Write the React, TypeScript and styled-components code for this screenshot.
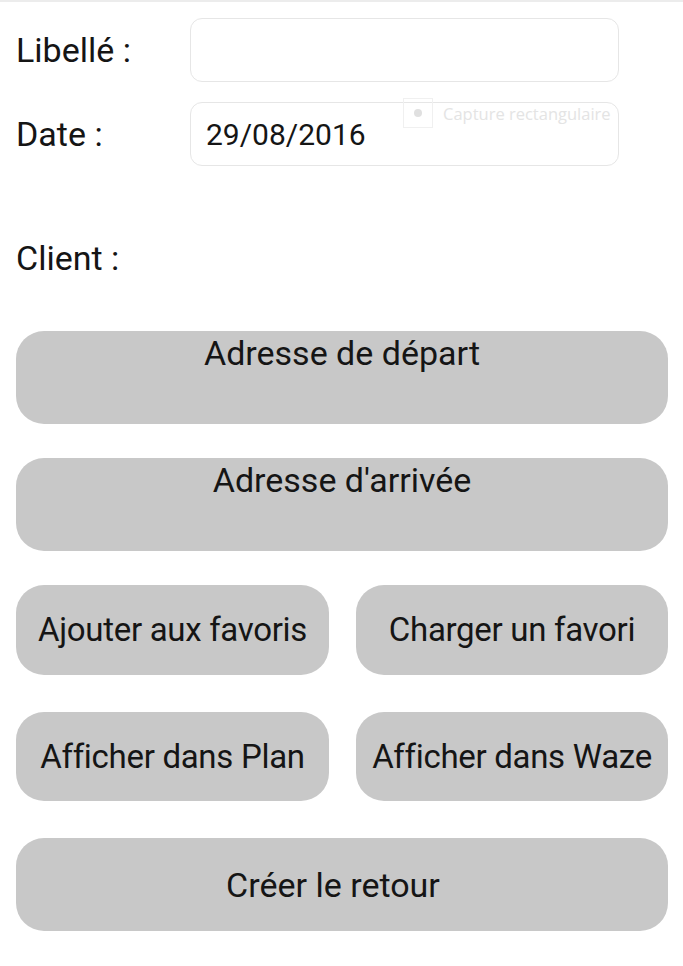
import React from "react";
import styled, { createGlobalStyle } from "styled-components";

const Global = createGlobalStyle`
  html, body { margin: 0; padding: 0; background: #ffffff; }
  body { font-family: Roboto, "Liberation Sans", Arial, sans-serif; color: #111; }
`;

const Page = styled.div`
  position: relative;
  width: 683px;
  min-height: 966px;
  box-sizing: border-box;
  padding: 0 15px 0 16px;
  border-top: 2px solid #ececec;
  display: flex;
  flex-direction: column;
`;

const FieldRow = styled.div<{ $top: number }>`
  display: flex;
  align-items: center;
  height: 64px;
  margin-top: ${(p) => p.$top}px;
`;

const Label = styled.div`
  width: 174px;
  font-size: 34px;
  line-height: 40px;
  color: #151515;
  letter-spacing: 0px;
`;

const Input = styled.div`
  width: 429px;
  height: 64px;
  box-sizing: border-box;
  border: 1.5px solid #e6e6e6;
  border-radius: 12px;
  display: flex;
  align-items: center;
  padding-left: 15px;
  font-size: 30px;
  color: #151515;
`;

const ClientRow = styled.div`
  height: 40px;
  margin-top: 72px;
  display: flex;
  align-items: center;
`;

const Buttons = styled.div`
  margin-top: 53px;
  display: flex;
  flex-direction: column;
`;

const WideButton = styled.button<{ $top?: boolean; $gap: number; $shift?: number }>`
  all: unset;
  box-sizing: border-box;
  width: 652px;
  height: 93px;
  margin-top: ${(p) => p.$gap}px;
  border-radius: 28px;
  background: #c8c8c8;
  display: flex;
  justify-content: center;
  align-items: ${(p) => (p.$top ? "flex-start" : "center")};
  padding-top: ${(p) => (p.$top ? "2px" : "0")};
  padding-right: ${(p) => p.$shift ?? 0}px;
  font-family: Roboto, "Liberation Sans", Arial, sans-serif;
  font-size: 34px;
  line-height: 40px;
  color: #151515;
`;

const HalfRow = styled.div<{ $gap: number; $h: number }>`
  display: grid;
  grid-template-columns: 313px 312px;
  column-gap: 27px;
  height: ${(p) => p.$h}px;
  margin-top: ${(p) => p.$gap}px;
`;

const HalfButton = styled.button`
  all: unset;
  box-sizing: border-box;
  border-radius: 28px;
  background: #c8c8c8;
  display: flex;
  justify-content: center;
  align-items: center;
  font-family: Roboto, "Liberation Sans", Arial, sans-serif;
  font-size: 33px;
  line-height: 40px;
  color: #151515;
  white-space: nowrap;
  letter-spacing: -0.3px;
`;

const CaptureHint = styled.div`
  position: absolute;
  left: 403px;
  top: 96px;
  display: flex;
  align-items: center;
  gap: 10px;
  font-family: "Open Sans", Roboto, sans-serif;
  font-size: 16.5px;
  color: #e4e4e4;
`;

const CaptureBox = styled.div`
  width: 30px;
  height: 30px;
  box-sizing: border-box;
  border: 1px solid #f0f0f0;
  display: flex;
  align-items: center;
  justify-content: center;
  &::after {
    content: "";
    width: 8px;
    height: 8px;
    border-radius: 50%;
    background: #e0e0e0;
  }
`;

export default function App() {
  return (
    <>
      <Global />
      <Page>
        <FieldRow $top={16}>
          <Label>Libellé :</Label>
          <Input />
        </FieldRow>
        <FieldRow $top={20}>
          <Label>Date :</Label>
          <Input>29/08/2016</Input>
        </FieldRow>
        <ClientRow>
          <Label>Client :</Label>
        </ClientRow>
        <Buttons>
          <WideButton $top $gap={0}>Adresse de départ</WideButton>
          <WideButton $top $gap={34}>Adresse d'arrivée</WideButton>
          <HalfRow $gap={34} $h={90}>
            <HalfButton>Ajouter aux favoris</HalfButton>
            <HalfButton>Charger un favori</HalfButton>
          </HalfRow>
          <HalfRow $gap={37} $h={89}>
            <HalfButton>Afficher dans Plan</HalfButton>
            <HalfButton>Afficher dans Waze</HalfButton>
          </HalfRow>
          <WideButton $gap={37} $shift={18}>Créer le retour</WideButton>
        </Buttons>
        <CaptureHint>
          <CaptureBox />
          Capture rectangulaire
        </CaptureHint>
      </Page>
    </>
  );
}
